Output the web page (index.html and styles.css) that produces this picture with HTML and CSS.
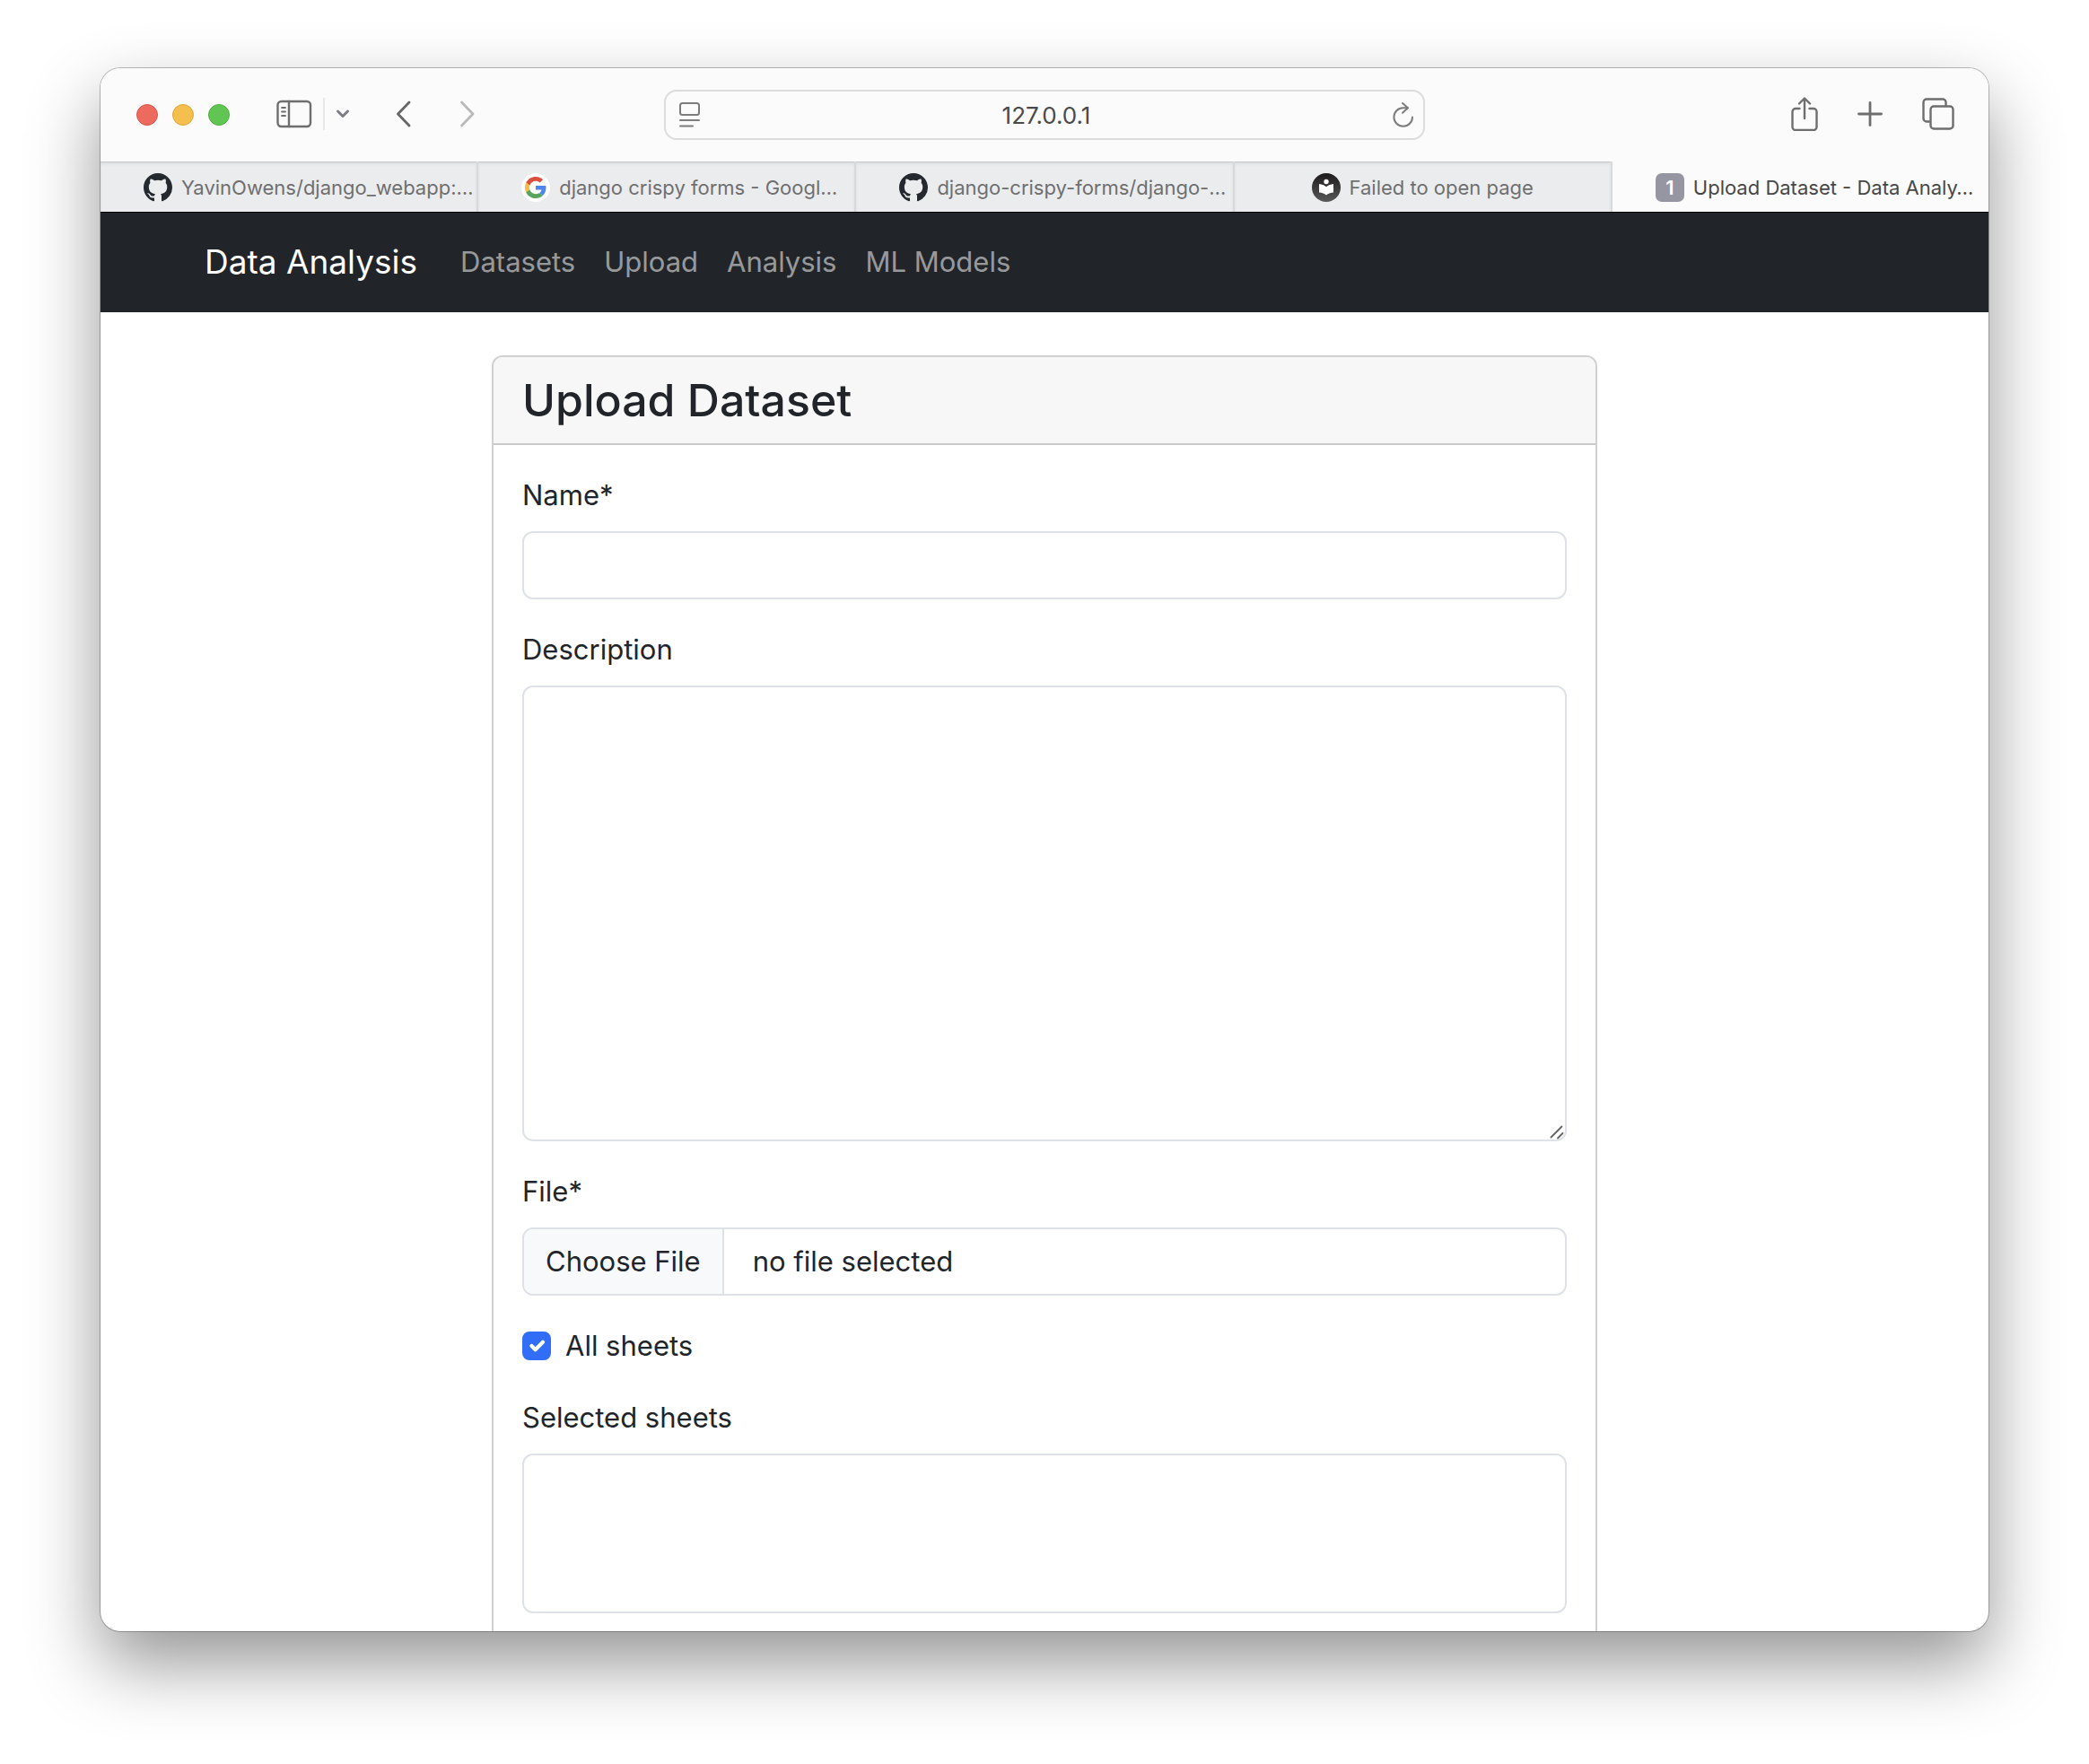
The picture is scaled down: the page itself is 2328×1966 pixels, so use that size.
FILE: index.html
```html
<!DOCTYPE html>
<html lang="en">
<head>
<meta charset="utf-8">
<title>Upload Dataset - Data Analysis</title>
<link rel="stylesheet" href="styles.css">
</head>
<body>
<svg class="sprite" aria-hidden="true">
  <symbol id="github" viewBox="0 0 16 16"><path fill="#24292f" d="M8 0C3.58 0 0 3.58 0 8c0 3.54 2.29 6.53 5.47 7.59.4.07.55-.17.55-.38 0-.19-.01-.82-.01-1.49-2.01.37-2.53-.49-2.69-.94-.09-.23-.48-.94-.82-1.13-.28-.15-.68-.52-.01-.53.63-.01 1.08.58 1.23.82.72 1.21 1.87.87 2.33.66.07-.52.28-.87.51-1.07-1.78-.2-3.64-.89-3.64-3.95 0-.87.31-1.59.82-2.15-.08-.2-.36-1.02.08-2.12 0 0 .67-.21 2.2.82.64-.18 1.32-.27 2-.27s1.36.09 2 .27c1.53-1.04 2.2-.82 2.2-.82.44 1.1.16 1.92.08 2.12.51.56.82 1.27.82 2.15 0 3.07-1.87 3.75-3.65 3.95.29.25.54.73.54 1.48 0 1.07-.01 1.93-.01 2.2 0 .21.15.46.55.38A8.01 8.01 0 0 0 16 8c0-4.42-3.58-8-8-8z"/></symbol>
</svg>

<div class="window">
  <header class="toolbar">
    <div class="tools tools-left">
      <div class="lights">
        <button class="light red" aria-label="Close"></button>
        <button class="light yellow" aria-label="Minimize"></button>
        <button class="light green" aria-label="Zoom"></button>
      </div>
      <div class="sidebar-tools">
        <button class="tool" aria-label="Sidebar">
          <svg width="40" height="32" viewBox="0 0 40 32" fill="none" stroke="#6e6e6e" stroke-width="2.4" stroke-linecap="round"><rect x="1.5" y="2" width="36.5" height="28" rx="4"/><path d="M14 2v28"/><path d="M6 9h4M6 13.500h4M6 18h4" stroke-width="1.800"/></svg>
        </button>
        <span class="divider"></span>
        <button class="tool" aria-label="Tab groups">
          <svg width="16" height="12" viewBox="0 0 16 12" fill="none" stroke="#7f7d84" stroke-width="3" stroke-linecap="round" stroke-linejoin="round"><path d="M2.500 3l5.500 5.500L13.500 3"/></svg>
        </button>
      </div>
      <div class="history">
        <button class="tool" aria-label="Back">
          <svg width="16" height="32" viewBox="2 0 16 32" fill="none" stroke="#666" stroke-width="2.800" stroke-linecap="round" stroke-linejoin="round"><path d="M16 3L3.500 16 16 29"/></svg>
        </button>
        <button class="tool" aria-label="Forward">
          <svg width="18" height="32" viewBox="0 0 18 32" fill="none" stroke="#b9b9b9" stroke-width="2.800" stroke-linecap="round" stroke-linejoin="round"><path d="M2.500 3L15 16 2.500 29"/></svg>
        </button>
      </div>
    </div>
    <div class="address">
      <button class="tool" aria-label="Page menu">
        <svg width="24" height="30" viewBox="0 0 24 30" fill="none" stroke="#7c7c7c" stroke-width="2" stroke-linecap="round"><rect x="2" y="2" width="21" height="13" rx="2.500"/><path d="M2 21h21M2 27.500h14"/></svg>
      </button>
      <input class="address-text" type="text" value="127.0.0.1" aria-label="Address">
      <button class="tool" aria-label="Reload">
        <svg width="24" height="30" viewBox="0 0 24 30" fill="none" stroke="#7c7c7c" stroke-width="2" stroke-linecap="round" stroke-linejoin="round"><path d="M22 17.500A10.300 10.300 0 1 1 11.700 7.200h5"/><path d="M11 2l6 5.200-6 5.500"/></svg>
      </button>
    </div>
    <div class="tools tools-right">
      <button class="tool" aria-label="Share">
        <svg width="30" height="38" viewBox="0 0 30 38" fill="none" stroke="#6e6e6e" stroke-width="2.400" stroke-linecap="round" stroke-linejoin="round"><path d="M9.500 13H5a3.500 3.500 0 0 0-3.500 3.500v17A3.500 3.500 0 0 0 5 37h20a3.500 3.500 0 0 0 3.500-3.500v-17A3.500 3.500 0 0 0 25 13h-4.500"/><path d="M15 24V2M9 7.500L15 1.500l6 6"/></svg>
      </button>
      <button class="tool" aria-label="New tab">
        <svg width="28" height="28" viewBox="0 0 28 28" fill="none" stroke="#6e6e6e" stroke-width="2.800" stroke-linecap="round"><path d="M14 1.500v25M1.500 14h25"/></svg>
      </button>
      <button class="tool" aria-label="Tab overview">
        <svg width="36" height="36" viewBox="0 0 36 36" fill="none" stroke="#6e6e6e" stroke-width="2.400" stroke-linejoin="round"><path d="M9.500 26.500H5A3.500 3.500 0 0 1 1.500 23V5A3.500 3.500 0 0 1 5 1.500h18A3.500 3.500 0 0 1 26.500 5v4"/><rect x="9.500" y="9.500" width="25" height="25" rx="3.500"/></svg>
      </button>
    </div>
  </header>

  <nav class="tabs" aria-label="Tabs">
    <a class="tab" href="#"><svg class="favicon"><use href="#github"/></svg><span>YavinOwens/django_webapp:…</span></a>
    <a class="tab" href="#">
      <svg class="favicon" viewBox="0 0 32 32"><circle cx="16" cy="16" r="16" fill="#fff"/><g transform="translate(4 4) scale(.5)"><path fill="#db4f3f" d="M24 9.500c3.540 0 6.710 1.220 9.210 3.600l6.850-6.850C35.900 2.380 30.470 0 24 0 14.620 0 6.510 5.380 2.560 13.220l7.980 6.190C12.430 13.720 17.740 9.500 24 9.500z"/><path fill="#4f86ec" d="M46.980 24.550c0-1.570-.15-3.090-.38-4.550H24v9.020h12.940c-.58 2.960-2.260 5.480-4.780 7.180l7.730 6c4.510-4.180 7.090-10.360 7.090-17.650z"/><path fill="#f2bd42" d="M10.530 28.590c-.48-1.450-.76-2.990-.76-4.590s.27-3.140.76-4.590l-7.980-6.190C.92 16.460 0 20.120 0 24s.92 7.540 2.560 10.780l7.970-6.190z"/><path fill="#57a55c" d="M24 48c6.480 0 11.930-2.130 15.890-5.810l-7.730-6c-2.150 1.450-4.920 2.300-8.160 2.300-6.260 0-11.570-4.220-13.470-9.910l-7.980 6.190C6.510 42.620 14.620 48 24 48z"/></g></svg>
      <span>django crispy forms - Googl…</span></a>
    <a class="tab" href="#"><svg class="favicon"><use href="#github"/></svg><span>django-crispy-forms/django-…</span></a>
    <a class="tab tab-centered" href="#">
      <svg class="favicon" viewBox="0 0 32 32"><defs><linearGradient id="shade" x1="0" y1="0" x2="0" y2="1"><stop offset="0" stop-color="#1c1a1b"/><stop offset="1" stop-color="#5a595a"/></linearGradient></defs><circle cx="16" cy="16" r="16" fill="url(#shade)"/><circle cx="16" cy="9.500" r="2.700" fill="#fff"/><path fill="#fff" d="M16 15.200c-2.200-1.900-4.800-3-8-3.300v9.600c3.200.2 5.900 1.200 8 3 2.100-1.800 4.800-2.800 8-3v-9.600c-3.200.3-5.800 1.400-8 3.300z"/></svg>
      <span>Failed to open page</span></a>
    <a class="tab tab-active" href="#" aria-current="page"><span class="favicon badge">1</span><span>Upload Dataset - Data Analy…</span></a>
  </nav>

  <div class="page">
    <nav class="navbar" aria-label="Main">
      <div class="container navbar-inner">
        <a class="brand" href="#">Data Analysis</a>
        <ul class="nav-list">
          <li><a class="nav-link" href="#">Datasets</a></li>
          <li><a class="nav-link" href="#">Upload</a></li>
          <li><a class="nav-link" href="#">Analysis</a></li>
          <li><a class="nav-link" href="#">ML Models</a></li>
        </ul>
      </div>
    </nav>

    <main class="container">
      <section class="card">
        <h1 class="card-header">Upload Dataset</h1>
        <form class="card-body">
          <div class="field">
            <label for="name">Name*</label>
            <input class="control" id="name" type="text" required>
          </div>
          <div class="field">
            <label for="description">Description</label>
            <div class="textarea-wrap">
              <textarea class="control description" id="description" rows="10"></textarea>
              <svg class="grip" width="16" height="16" viewBox="0 0 16 16" fill="none" stroke="#636363" stroke-width="1.800" stroke-linecap="round"><path d="M1.500 13.500l12-12M9 14.500l5.500-5.500"/></svg>
            </div>
          </div>
          <div class="field">
            <label for="file">File*</label>
            <div class="file-wrap">
              <input class="file-input" id="file" type="file" required>
              <label class="control file-control" for="file">
                <span class="file-button">Choose File</span>
                <span class="file-name">no file selected</span>
              </label>
            </div>
          </div>
          <div class="check">
            <input class="checkbox" id="all-sheets" type="checkbox" checked>
            <label for="all-sheets">All sheets</label>
          </div>
          <div class="field">
            <label for="sheets">Selected sheets</label>
            <select class="control sheets" id="sheets" multiple></select>
          </div>
        </form>
      </section>
    </main>
  </div>
</div>
</body>
</html>
```
FILE: styles.css
```css
* {
  box-sizing: border-box;
}

body {
  margin: 0;
  min-height: 100vh;
  padding: 76px 112px 148px;
  background: #fff;
  color: #212529;
  font: 31px/48px Inter, "Liberation Sans", sans-serif;
}

a {
  color: inherit;
  text-decoration: none;
}

button,
input,
textarea,
select {
  font: inherit;
  color: inherit;
}

.sprite {
  position: absolute;
  width: 0;
  height: 0;
}

/* Browser window */
.window {
  display: flex;
  flex-direction: column;
  height: calc(100vh - 224px);
  overflow: hidden;
  border-radius: 22px;
  background: #fff;
  box-shadow: 0 0 0 1px rgba(0, 0, 0, 0.26), 0 36px 80px rgba(0, 0, 0, 0.42);
}

.toolbar {
  display: grid;
  grid-template-columns: 1fr minmax(0, 848px) 1fr;
  align-items: center;
  flex: none;
  height: 104px;
  background: #fbfbfb;
}

.tools {
  display: flex;
  align-items: center;
}

.tools-left {
  gap: 52px;
  padding-left: 40px;
}

.tools-right {
  justify-content: flex-end;
  gap: 44px;
  padding: 0 38px 2px 0;
}

.lights {
  display: flex;
  gap: 16px;
}

.light {
  width: 24px;
  height: 24px;
  padding: 0;
  border: 1px solid;
  border-radius: 50%;
}

.red {
  background: #ec6a5e;
  border-color: #d8574b;
}

.yellow {
  background: #f5bf4f;
  border-color: #dba63a;
}

.green {
  background: #61c554;
  border-color: #4dae41;
}

.tool {
  display: flex;
  flex: none;
  padding: 0;
  border: 0;
  background: none;
}

.sidebar-tools {
  display: flex;
  align-items: center;
  gap: 12px;
  padding-bottom: 2px;
}

.divider {
  width: 2px;
  height: 36px;
  background: #e8e8e8;
}

.history {
  display: flex;
  gap: 54px;
  padding-bottom: 2px;
}

.address {
  display: flex;
  align-items: center;
  height: 56px;
  padding: 0 10px 0 14px;
  border: 2px solid #dcdcdc;
  border-radius: 14px;
}

.address-text {
  flex: 1;
  min-width: 0;
  padding: 2px 0 0;
  border: 0;
  background: none;
  color: #4a4a4a;
  font-size: 26px;
  text-align: center;
}

/* The bar's own colour shows through the gaps as the lines between tabs */
.tabs {
  display: grid;
  grid-template-columns: repeat(5, minmax(0, 1fr));
  gap: 2px;
  flex: none;
  height: 56px;
  background: #d8d9da;
  font-size: 22px;
}

.tab {
  display: flex;
  align-items: center;
  gap: 10px;
  padding: 2px 0 0 48px;
  overflow: hidden;
  background: #ebecee;
  box-shadow: inset 0 1px #c6c6c6, inset 0 3px 3px rgba(0, 0, 0, 0.06);
  color: #6f6f70;
  white-space: nowrap;
}

.tab-centered {
  justify-content: center;
  padding-left: 0;
}

.tab-active {
  background: #fbfbfb;
  box-shadow: none;
  color: #474747;
}

.favicon {
  flex: none;
  width: 32px;
  height: 32px;
}

.badge {
  border-radius: 7px;
  background: #9695a2;
  color: #fff;
  font-weight: 600;
  line-height: 32px;
  text-align: center;
}

/* Web page */
.page {
  flex: 1;
  min-height: 0;
  overflow: hidden;
}

.container {
  max-width: 1920px;
  margin: 0 auto;
  padding: 0 24px;
}

.navbar {
  padding: 16px 0;
  background: #212529;
  box-shadow: inset 0 1px #000;
}

.navbar-inner {
  display: flex;
  align-items: center;
}

.brand {
  margin-right: 32px;
  color: #fff;
  font-size: 37px;
  line-height: 80px;
}

.nav-list {
  display: flex;
  margin: 0;
  padding: 0;
  list-style: none;
}

.nav-link {
  padding: 0 16px;
  color: rgba(255, 255, 255, 0.55);
}

.card {
  max-width: 1232px;
  margin: 48px auto;
  border: 2px solid #d0d0d0;
  border-radius: 12px;
}

.card-header {
  margin: 0;
  padding: 16px 32px;
  border-bottom: 2px solid #c9c9c9;
  border-radius: 10px 10px 0 0;
  background: #f7f7f7;
  font-size: 50px;
  font-weight: 500;
  line-height: 64px;
}

.card-body {
  display: flex;
  flex-direction: column;
  gap: 32px;
  padding: 32px;
}

.field {
  display: flex;
  flex-direction: column;
  gap: 16px;
}

.control {
  display: block;
  width: 100%;
  margin: 0;
  padding: 12px 24px;
  border: 2px solid #dee2e6;
  border-radius: 12px;
  background: #fff;
}

.control:focus {
  outline: 8px solid #c2dbfe;
}

.textarea-wrap,
.file-wrap {
  position: relative;
}

.description {
  resize: none;
}

.grip {
  position: absolute;
  right: 3px;
  bottom: 2px;
}

.file-input {
  position: absolute;
  inset: 0;
  width: 100%;
  opacity: 0;
}

.file-control {
  display: flex;
  padding: 0;
  overflow: hidden;
}

.file-button {
  padding: 12px 24px;
  border-right: 2px solid #dee2e6;
  background: #f8f9fa;
}

.file-name {
  padding: 12px 32px;
}

.check {
  display: flex;
  align-items: center;
  gap: 16px;
}

.checkbox {
  appearance: none;
  width: 32px;
  height: 32px;
  margin: 0;
  border: 2px solid #dee2e6;
  border-radius: 8px;
}

.checkbox:checked {
  border-color: #316df6;
  background: #316df6 url("data:image/svg+xml,%3Csvg xmlns='http://www.w3.org/2000/svg' viewBox='0 0 20 20'%3E%3Cpath fill='none' stroke='%23fff' stroke-linecap='round' stroke-linejoin='round' stroke-width='3' d='m6 10 3 3 6-6'/%3E%3C/svg%3E") center / 28px no-repeat;
}

.sheets {
  height: 178px;
}
```
